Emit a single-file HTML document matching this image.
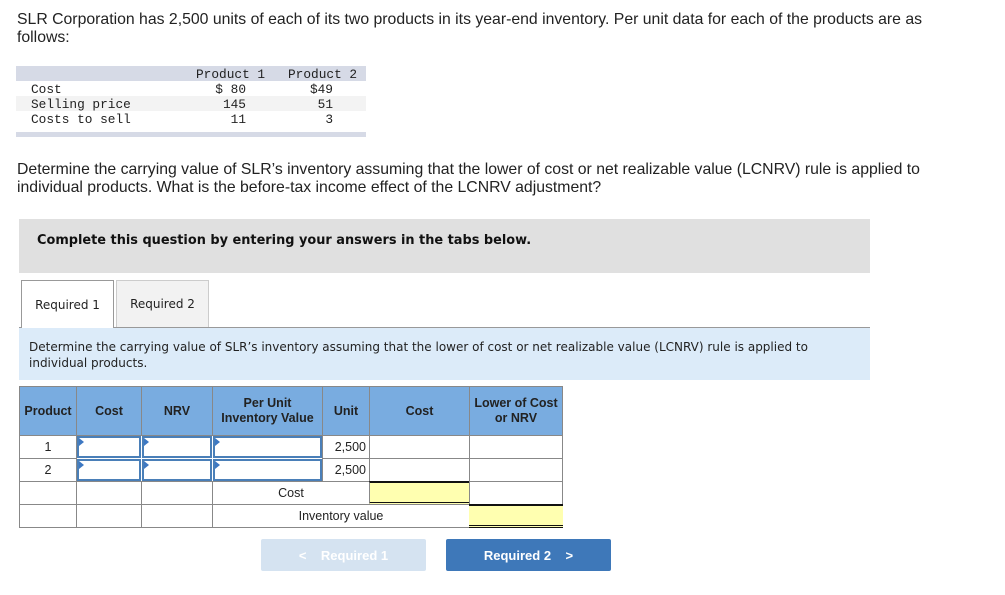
<!DOCTYPE html>
<html><head><style>
*{margin:0;padding:0;box-sizing:border-box}
body{width:1005px;height:595px;background:#fff;position:relative;font-family:"Liberation Sans",sans-serif;color:#222;overflow:hidden}
.a{position:absolute}
.p{font-size:15.8px;line-height:18px;left:17px}
.mono{font-family:"Liberation Mono",monospace;font-size:12.8px;line-height:15px;color:#222}
.cell{position:absolute;border:1px solid #888;}
.h{background:#79ace0;font-weight:bold;font-size:12.5px;color:#222;display:flex;align-items:center;justify-content:center;text-align:center;line-height:15px}
.t{font-size:12.5px;display:flex;align-items:center}
.in{position:absolute;border:2px solid #4a7fb8;background:#fff}
.in:before{content:"";position:absolute;left:0;top:0;border-left:5px solid #3d78c2;border-top:4px solid transparent;border-bottom:4px solid transparent}
</style></head><body>
<div class="a p" style="top:11px;width:925px">SLR Corporation has 2,500 units of each of its two products in its year-end inventory. Per unit data for each of the products are as follows:</div>

<div class="a" style="left:16px;top:66px;width:350px;height:15px;background:#d6dae6"></div>
<div class="a" style="left:16px;top:96px;width:350px;height:15px;background:#f3f3f3"></div>
<div class="a" style="left:16px;top:132px;width:350px;height:5px;background:#d6dae6"></div>
<div class="a mono" style="left:196px;top:67px">Product 1</div>
<div class="a mono" style="left:288px;top:67px">Product 2</div>
<div class="a mono" style="left:31px;top:82px">Cost<br>Selling price<br>Costs to sell</div>
<div class="a mono" style="left:206px;top:82px;width:40px;text-align:right;white-space:pre">$ 80
145
11</div>
<div class="a mono" style="left:295px;top:82px;width:38px;text-align:right;white-space:pre">$49
51
3</div>

<div class="a p" style="top:161px;width:925px">Determine the carrying value of SLR’s inventory assuming that the lower of cost or net realizable value (LCNRV) rule is applied to individual products. What is the before-tax income effect of the LCNRV adjustment?</div>

<div class="a" style="left:19px;top:219px;width:851px;height:54px;background:#e0e0e0"></div>
<div class="a" style="left:37px;top:233px;font-family:'DejaVu Sans',sans-serif;font-weight:bold;font-size:12.9px;color:#111">Complete this question by entering your answers in the tabs below.</div>

<div class="a" style="left:19px;top:327px;width:851px;height:53px;background:#dcebf9;border-top:1px solid #999"></div>
<div class="a" style="left:21px;top:280px;width:93px;height:48px;background:#fff;border:1px solid #999;border-bottom:none;font-family:'DejaVu Sans',sans-serif;font-size:12px;display:flex;align-items:center;justify-content:center">Required 1</div>
<div class="a" style="left:116px;top:280px;width:93px;height:47px;background:#f2f2f2;border:1px solid #ccc;border-bottom:none;font-family:'DejaVu Sans',sans-serif;font-size:12px;display:flex;align-items:center;justify-content:center">Required 2</div>
<div class="a" style="left:29px;top:339px;width:820px;font-family:'DejaVu Sans',sans-serif;font-size:12px;line-height:16px;color:#222">Determine the carrying value of SLR’s inventory assuming that the lower of cost or net realizable value (LCNRV) rule is applied to individual products.</div>

<div class="cell h" style="left:19px;top:386px;width:58px;height:50px">Product</div>
<div class="cell h" style="left:76px;top:386px;width:66px;height:50px">Cost</div>
<div class="cell h" style="left:141px;top:386px;width:72px;height:50px">NRV</div>
<div class="cell h" style="left:212px;top:386px;width:111px;height:50px">Per Unit<br>Inventory Value</div>
<div class="cell h" style="left:322px;top:386px;width:48px;height:50px">Unit</div>
<div class="cell h" style="left:369px;top:386px;width:101px;height:50px">Cost</div>
<div class="cell h" style="left:469px;top:386px;width:94px;height:50px">Lower of Cost<br>or NRV</div>

<div class="cell t" style="left:19px;top:435px;width:58px;height:24px;justify-content:center">1</div>
<div class="cell t" style="left:19px;top:458px;width:58px;height:24px;justify-content:center">2</div>
<div class="cell" style="left:19px;top:481px;width:58px;height:24px"></div>
<div class="cell" style="left:19px;top:504px;width:58px;height:24px"></div>
<div class="cell" style="left:76px;top:481px;width:66px;height:24px"></div>
<div class="cell" style="left:76px;top:504px;width:66px;height:24px"></div>
<div class="cell" style="left:141px;top:481px;width:72px;height:24px"></div>
<div class="cell" style="left:141px;top:504px;width:72px;height:24px"></div>
<div class="in" style="left:77px;top:436px;width:64px;height:22px"></div>
<div class="in" style="left:142px;top:436px;width:70px;height:22px"></div>
<div class="in" style="left:213px;top:436px;width:109px;height:22px"></div>
<div class="in" style="left:77px;top:459px;width:64px;height:22px"></div>
<div class="in" style="left:142px;top:459px;width:70px;height:22px"></div>
<div class="in" style="left:213px;top:459px;width:109px;height:22px"></div>
<div class="cell t" style="left:322px;top:435px;width:48px;height:24px;justify-content:flex-end;padding-right:3px">2,500</div>
<div class="cell t" style="left:322px;top:458px;width:48px;height:24px;justify-content:flex-end;padding-right:3px">2,500</div>
<div class="cell" style="left:369px;top:435px;width:101px;height:24px"></div>
<div class="cell" style="left:369px;top:458px;width:101px;height:24px"></div>
<div class="cell" style="left:469px;top:435px;width:94px;height:24px"></div>
<div class="cell" style="left:469px;top:458px;width:94px;height:24px"></div>
<div class="cell t" style="left:212px;top:481px;width:158px;height:24px;justify-content:center">Cost</div>
<div class="a" style="left:369px;top:481px;width:101px;height:24px;background:#ffffb0;border-top:2px solid #111;border-bottom:3px double #111;border-left:1px solid #888"></div>
<div class="cell" style="left:469px;top:481px;width:94px;height:24px"></div>
<div class="cell t" style="left:212px;top:504px;width:258px;height:24px;justify-content:center">Inventory value</div>
<div class="a" style="left:469px;top:504px;width:94px;height:24px;background:#ffffb0;border-top:2px solid #111;border-bottom:3px double #111"></div>

<div class="a" style="left:261px;top:539px;width:165px;height:32px;background:#d5e3f1;border-radius:2px;color:#fff;font-weight:bold;font-size:13px;display:flex;align-items:center;justify-content:center">&lt;&nbsp;&nbsp;&nbsp;&nbsp;Required 1</div>
<div class="a" style="left:446px;top:539px;width:165px;height:32px;background:#3e78b9;border-radius:2px;color:#fff;font-weight:bold;font-size:13px;display:flex;align-items:center;justify-content:center">Required 2&nbsp;&nbsp;&nbsp;&nbsp;&gt;</div>
</body></html>
